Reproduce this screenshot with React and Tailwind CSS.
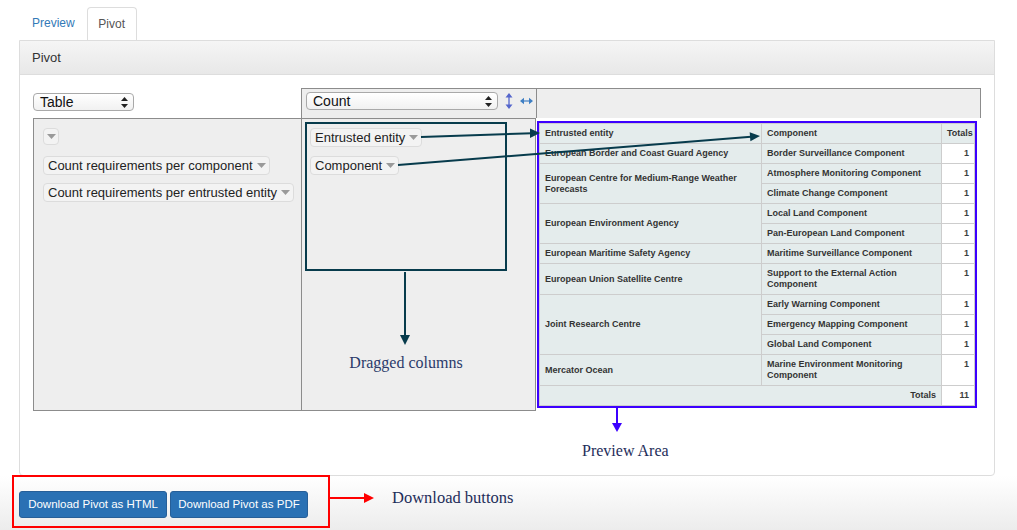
import React from "react";

const rows = [
  { entity: "European Border and Coast Guard Agency", items: [["Border Surveillance Component", 1]] },
  { entity: "European Centre for Medium-Range Weather Forecasts", items: [["Atmosphere Monitoring Component", 1], ["Climate Change Component", 1]] },
  { entity: "European Environment Agency", items: [["Local Land Component", 1], ["Pan-European Land Component", 1]] },
  { entity: "European Maritime Safety Agency", items: [["Maritime Surveillance Component", 1]] },
  { entity: "European Union Satellite Centre", items: [["Support to the External Action Component", 1]] },
  { entity: "Joint Research Centre", items: [["Early Warning Component", 1], ["Emergency Mapping Component", 1], ["Global Land Component", 1]] },
  { entity: "Mercator Ocean", items: [["Marine Environment Monitoring Component", 1]] },
];

function Caret({ className = "ml-[4px]" }){
  return <svg className={className} width="9" height="5" viewBox="0 0 9 5"><path d="M0 0h9L4.5 5z" fill="#9a9a9a"/></svg>;
}

function Pill({ children, className = "" }){
  return (
    <div className={`inline-flex items-center self-start h-[19px] pl-[4px] pr-[3px] bg-[#f3f3f3] border border-[#dcdcdc] rounded-[4px] text-[13px] text-[#222] leading-[17px] whitespace-nowrap ${className}`}>
      {children}<Caret/>
    </div>
  );
}

function FakeSelect({ label, w }){
  return (
    <div className={`flex items-center justify-between h-[18px] ${w} pl-[6px] pr-[5px] border border-[#a9a9a9] rounded-[4px] bg-gradient-to-b from-white to-[#f1f1f1] text-[14px] text-[#111] leading-[16px]`}>
      <span>{label}</span>
      <svg width="7" height="11" viewBox="0 0 7 11"><path d="M3.5 0L7 4H0z M3.5 11L0 7h7z" fill="#222"/></svg>
    </div>
  );
}

const th = "border border-[#cdcdcd] bg-[#e4ecec] px-[5px] py-[4px] text-left align-middle font-bold text-[#333]";
const td = "border border-[#cdcdcd] bg-white px-[5px] py-[4px] text-right align-top font-bold text-[#3d3d3d]";

function PivotTable(){
  return (
    <table className="w-[435px] table-fixed border-collapse text-[9px] leading-[11px] font-['Liberation_Sans',Arial,sans-serif]">
      <colgroup>
        <col className="w-[222px]"/>
        <col className="w-[180px]"/>
        <col className="w-[33px]"/>
      </colgroup>
      <thead>
        <tr>
          <th className={th}>Entrusted entity</th>
          <th className={th}>Component</th>
          <th className={`${th} text-right`}>Totals</th>
        </tr>
      </thead>
      <tbody>
        {rows.map(r => r.items.map((it, i) => (
          <tr key={r.entity + i}>
            {i === 0 && <th rowSpan={r.items.length} className={th}>{r.entity}</th>}
            <th className={`${th} align-top`}>{it[0]}</th>
            <td className={td}>{it[1]}</td>
          </tr>
        )))}
        <tr>
          <th colSpan={2} className={`${th} text-right`}>Totals</th>
          <td className={td}>11</td>
        </tr>
      </tbody>
    </table>
  );
}

function Annotations(){
  return (
    <svg className="absolute left-0 top-0 pointer-events-none" width="1017" height="530" viewBox="0 0 1017 530">
      <g stroke="#073b4c" strokeWidth="2" fill="none">
        <line x1="421" y1="137" x2="532" y2="133.3"/>
        <line x1="398" y1="165" x2="751" y2="136.8"/>
        <line x1="405" y1="272" x2="405" y2="337"/>
      </g>
      <g fill="#073b4c">
        <polygon points="540,133 530,128.5 530,138"/>
        <polygon points="760,136 750.4,141.3 749.7,132.3"/>
        <polygon points="400,335 410,335 405,345"/>
      </g>
      <line x1="617" y1="407" x2="617" y2="425" stroke="#3c00ff" strokeWidth="2"/>
      <polygon points="612,423 622,423 617,432" fill="#3c00ff"/>
      <line x1="330" y1="498" x2="366" y2="498" stroke="#ff0000" strokeWidth="2"/>
      <polygon points="364,493 364,503 374,498" fill="#ff0000"/>
    </svg>
  );
}

export default function App(){
  return (
    <div className="relative w-[1017px] h-[530px] overflow-hidden bg-white font-['Liberation_Sans',Arial,sans-serif] text-[#333]">
      {/* tabs */}
      <div className="flex items-end h-[40px] pl-[20px]">
        <div className="h-[33px] px-[12px] text-[12px] leading-[33px] text-[#337ab7]">Preview</div>
        <div className="h-[33px] w-[50px] text-center border border-b-0 border-[#ddd] rounded-t-[4px] bg-white text-[12px] leading-[33px] text-[#555]">Pivot</div>
      </div>

      {/* panel */}
      <div className="ml-[19px] w-[976px] border border-[#ddd] rounded-b-[4px]">
        <div className="h-[34px] px-[12px] border-b border-[#ddd] bg-gradient-to-b from-[#f5f5f5] to-[#e8e8e8] text-[13px] leading-[33px] text-[#333]">Pivot</div>
        <div className="h-[400px] pt-[13px] pl-[13px]">
          <div className="w-[948px]">
            {/* row 1 */}
            <div className="flex h-[30px]">
              <div className="w-[268px] pt-[5px]"><FakeSelect label="Table" w="w-[101px]"/></div>
              <div className="flex items-start w-[235px] pt-[3px] pl-[4px] border-l border-t border-[#8c8c8c] bg-[#eee]">
                <FakeSelect label="Count" w="w-[192px]"/>
                <svg className="ml-[7px] mt-[1px]" width="8" height="16" viewBox="0 0 8 16">
                  <path d="M4 1.5v13" stroke="#5566cc" strokeWidth="1.3"/>
                  <path d="M4 0L7.5 4.5H0.5z M4 16L0.5 11.5h7z" fill="#5566cc"/>
                </svg>
                <svg className="ml-[7px] mt-[5px]" width="13" height="8" viewBox="0 0 13 8">
                  <path d="M1.5 4h10" stroke="#3f7fc4" strokeWidth="1.2"/>
                  <path d="M0 4L4 0.8v6.4z M13 4L9 0.8v6.4z" fill="#3f7fc4"/>
                </svg>
              </div>
              <div className="w-[445px] border-l border-t border-r border-[#8c8c8c] bg-[#eee]"></div>
            </div>
            {/* row 2 */}
            <div className="flex items-start">
              <div className="flex flex-col w-[268px] h-[293px] pt-[9px] pl-[9px] border-l border-t border-b border-[#8c8c8c] bg-[#eee]">
                <div className="self-start h-[17px] w-[16px] flex items-center justify-center bg-[#f3f3f3] border border-[#dcdcdc] rounded-[4px]"><Caret className=""/></div>
                <Pill className="mt-[11px]">Count requirements per component</Pill>
                <Pill className="mt-[8px]">Count requirements per entrusted entity</Pill>
              </div>
              <div className="w-[235px] h-[293px] pt-[3px] pl-[3px] border border-[#8c8c8c] bg-[#eee]">
                <div className="flex flex-col gap-[9px] w-[202px] h-[149px] pt-[4px] pl-[3px] border-2 border-[#073b4c]">
                  <Pill>Entrusted entity</Pill>
                  <Pill>Component</Pill>
                </div>
                <div className="w-[202px] mt-[82px] text-center font-['Liberation_Serif',serif] text-[16px] leading-[20px] text-[#2a3a6a]">Dragged columns</div>
              </div>
              <div className="pl-[1px] pt-[3px]">
                <div className="inline-block border-2 border-[#3c00ff]">
                  <PivotTable/>
                </div>
                <div className="ml-[45px] mt-[26px] font-['Liberation_Serif',serif] text-[16px] leading-[20px] text-[#1e2d5a]">Preview Area</div>
              </div>
            </div>
          </div>
        </div>
      </div>

      {/* footer */}
      <div className="h-[54px] flex items-start bg-gradient-to-b from-white to-[#ececec]">
        <div className="-mt-[1px] ml-[12px] w-[318px] h-[53px] pt-[14px] pl-[5px] flex gap-[3px] border-2 border-[#ff0000]">
          <button className="h-[27px] w-[148px] rounded-[3px] bg-[#2a71b4] border border-[#275f98] text-white text-[11.5px]">Download Pivot as HTML</button>
          <button className="h-[27px] w-[138px] rounded-[3px] bg-[#2a71b4] border border-[#275f98] text-white text-[11.5px]">Download Pivot as PDF</button>
        </div>
        <div className="ml-[62px] mt-[12px] font-['Liberation_Serif',serif] text-[16.5px] leading-[20px] text-[#1e2d5a]">Download buttons</div>
      </div>

      <Annotations/>
    </div>
  );
}
